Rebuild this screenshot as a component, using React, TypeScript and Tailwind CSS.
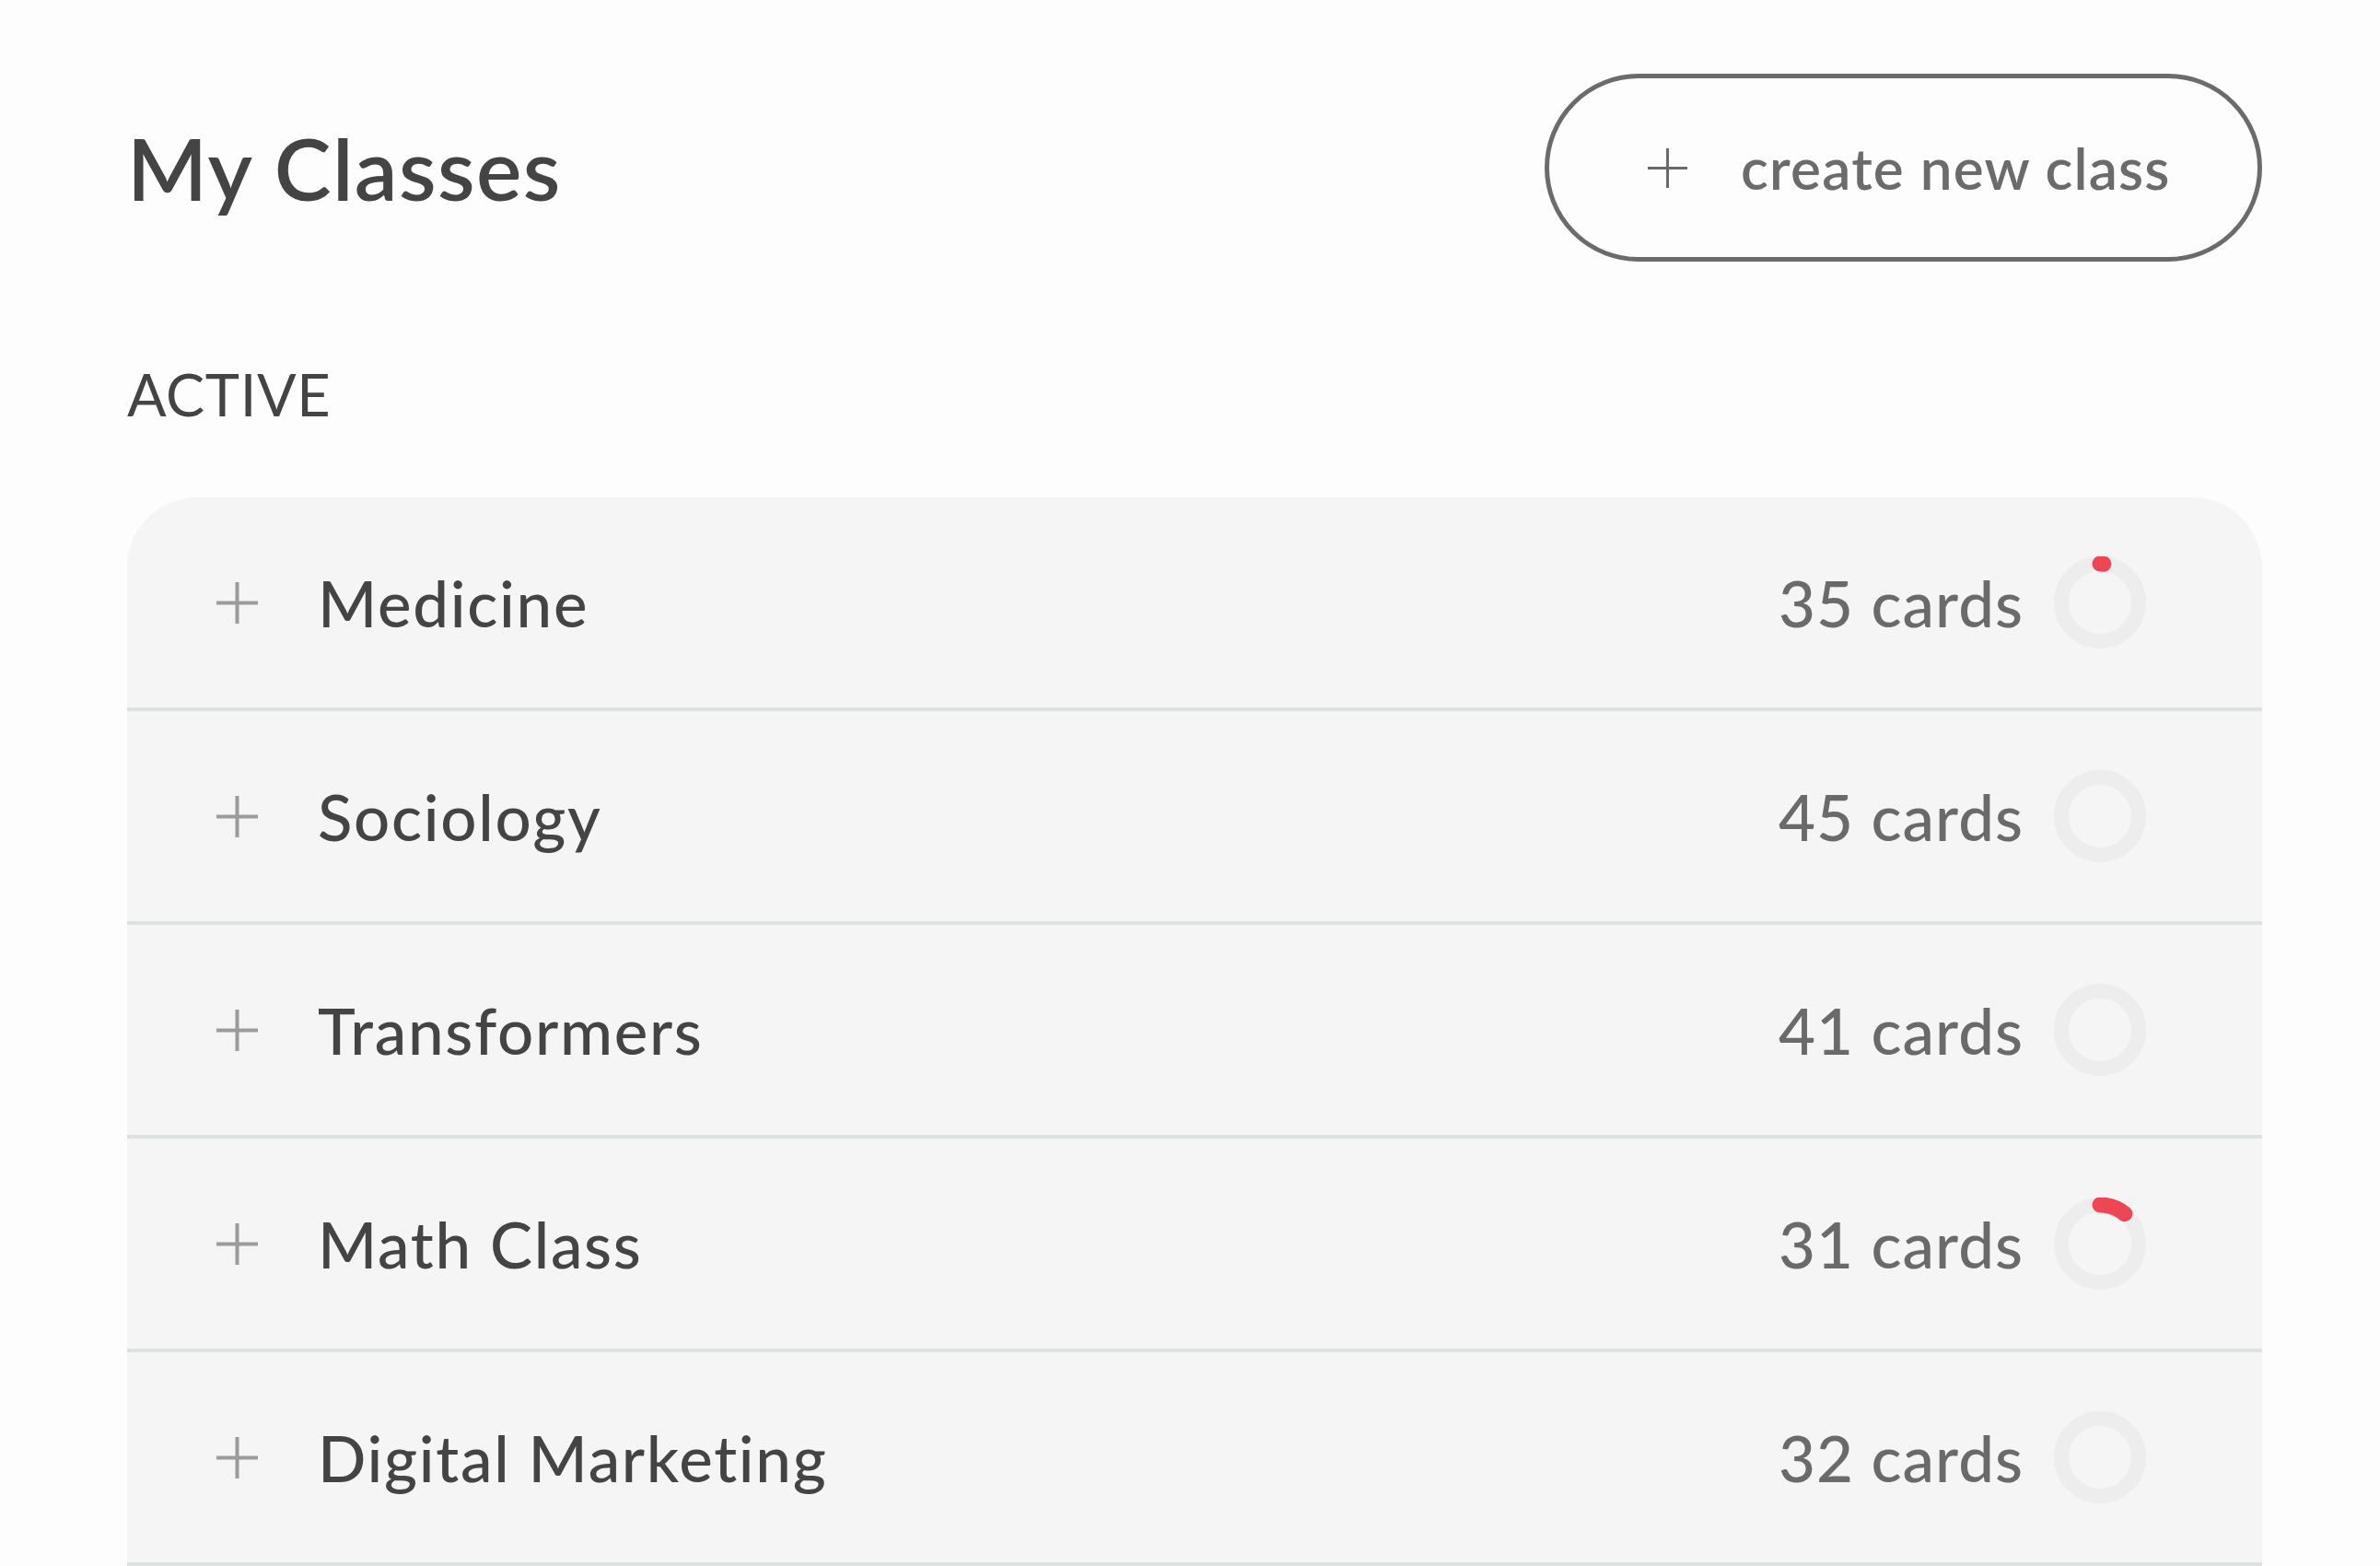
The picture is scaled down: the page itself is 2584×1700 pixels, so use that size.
import React from "react";

type Cls = { name: string; cards: number; progress: number };

const classes: Cls[] = [
  { name: "Medicine", cards: 35, progress: 0.015 },
  { name: "Sociology", cards: 45, progress: 0 },
  { name: "Transformers", cards: 41, progress: 0 },
  { name: "Math Class", cards: 31, progress: 0.11 },
  { name: "Digital Marketing", cards: 32, progress: 0 },
];

function Plus({ size, stroke, color }: { size: number; stroke: number; color: string }) {
  return (
    <svg width={size} height={size} viewBox={`0 0 ${size} ${size}`} className="shrink-0">
      <line x1={size / 2} y1={0} x2={size / 2} y2={size} stroke={color} strokeWidth={stroke} />
      <line x1={0} y1={size / 2} x2={size} y2={size / 2} stroke={color} strokeWidth={stroke} />
    </svg>
  );
}

function Ring({ progress }: { progress: number }) {
  const r = 42;
  const c = 2 * Math.PI * r;
  return (
    <svg width={100} height={100} viewBox="0 0 100 100" className="shrink-0">
      <circle cx={50} cy={50} r={r} fill="none" stroke="#ededed" strokeWidth={16} />
      {progress > 0 && (
        <circle
          cx={50}
          cy={50}
          r={r}
          fill="none"
          stroke="#ef4654"
          strokeWidth={17}
          strokeLinecap="round"
          strokeDasharray={`${progress * c} ${c}`}
          transform="rotate(-90 50 50)"
        />
      )}
    </svg>
  );
}

export default function App() {
  return (
    <div className="min-h-screen bg-[#fdfdfd] font-['Lato','Noto_Sans',sans-serif]">
      <div className="ml-[138px] w-[2318px] pt-[80px]">
        <header className="flex h-[204px] items-center justify-between">
          <h1 className="text-[93px] font-semibold leading-none tracking-[0.015em] text-[#444444]">My Classes</h1>
          <button className="flex h-[204px] w-[779px] items-center gap-[58px] rounded-full border-[5px] border-[#6b6b6b] pl-[107px] text-[#6b6b6b]">
            <Plus size={43} stroke={3} color="#6b6b6b" />
            <span className="text-[62px] font-semibold leading-none tracking-[0.02em]">create new class</span>
          </button>
        </header>

        <div className="mt-[112px] text-[63px] leading-none tracking-[0.01em] text-[#444444]">ACTIVE</div>

        <div className="mt-[81px] overflow-hidden rounded-t-[76px] bg-[#f5f5f5]">
          {classes.map((c) => (
            <div
              key={c.name}
              className="flex h-[232px] items-center border-b-4 border-[#dde2e1] pl-[97px] pr-[126px]"
            >
              <Plus size={45} stroke={4} color="#9b9b9b" />
              <span className="ml-[65px] text-[69px] font-medium leading-none tracking-[0.025em] text-[#444444]">
                {c.name}
              </span>
              <span className="ml-auto text-[69px] font-medium leading-none tracking-[0.015em] text-[#6a6a6a]">
                {c.cards} cards
              </span>
              <span className="ml-[33px]">
                <Ring progress={c.progress} />
              </span>
            </div>
          ))}
        </div>
      </div>
    </div>
  );
}
